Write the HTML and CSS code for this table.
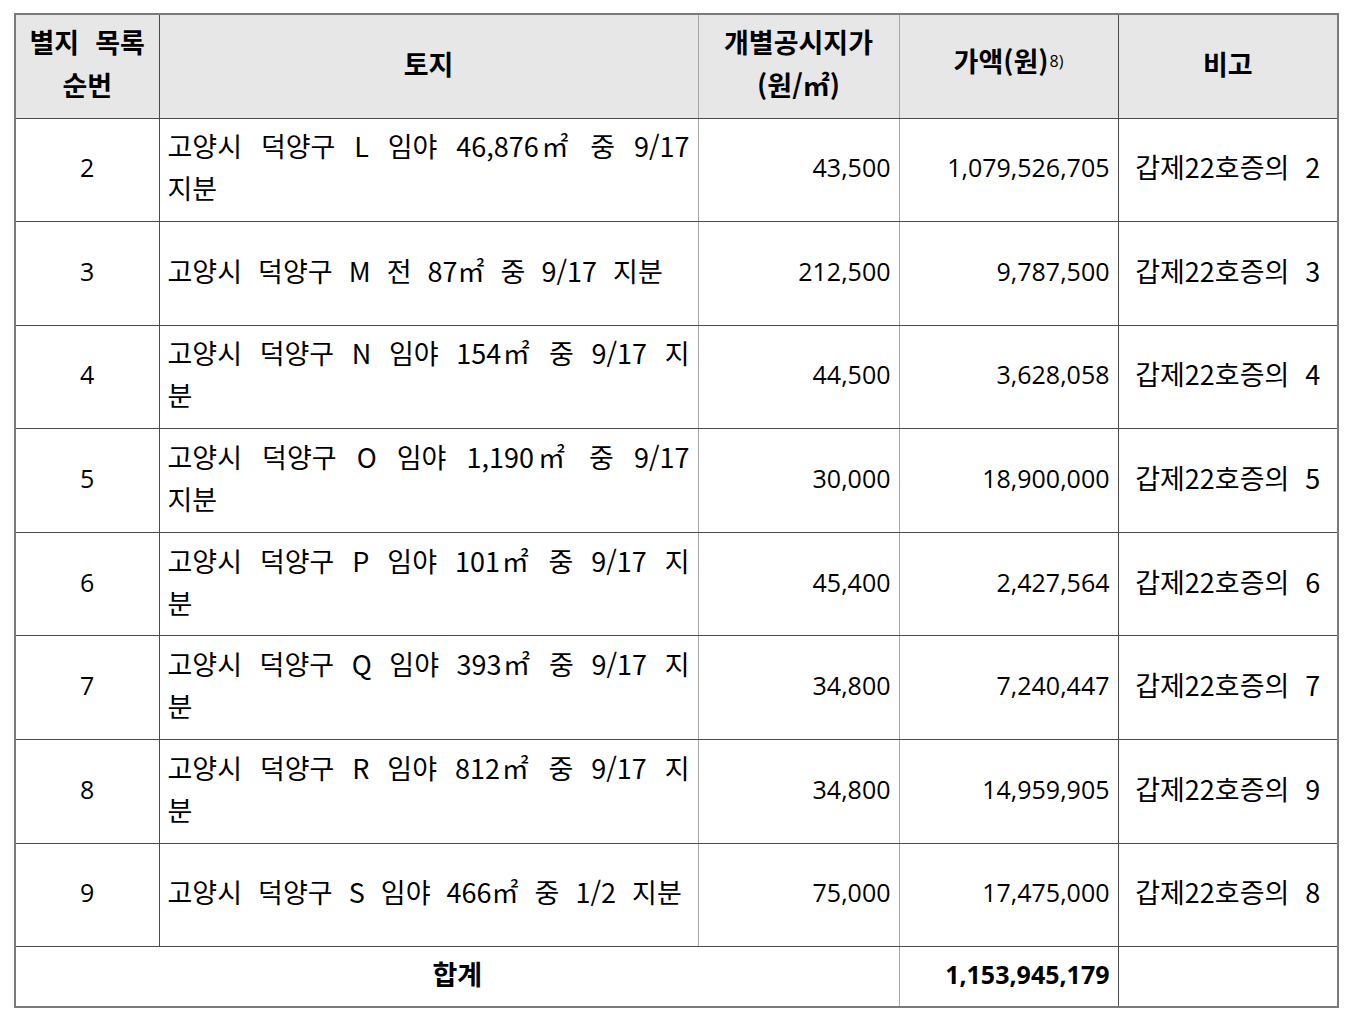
FILE: index.html
```html
<!DOCTYPE html>
<html lang="ko">
<head>
<meta charset="utf-8">
<title>별지 목록</title>
<link rel="stylesheet" href="styles.css">
</head>
<body>
<div class="page">
<table class="list">
  <colgroup>
    <col class="c-no"><col class="c-land"><col class="c-price"><col class="c-amount"><col class="c-note">
  </colgroup>
  <thead>
    <tr>
      <th class="b-dark">별지 목록 순번</th>
      <th class="b-light">토지</th>
      <th class="b-light">개별공시지가<br>(원/㎡)</th>
      <th class="b-dark">가액(원)<span class="sup">8)</span></th>
      <th>비고</th>
    </tr>
  </thead>
  <tbody>
    <tr>
      <td class="no b-dark">2</td>
      <td class="land b-light"><span class="full">고양시 덕양구 L 임야 46,876㎡ 중 9/17</span>지분</td>
      <td class="num b-light">43,500</td>
      <td class="num b-dark">1,079,526,705</td>
      <td class="note">갑제22호증의 2</td>
    </tr>
    <tr>
      <td class="no b-dark">3</td>
      <td class="land b-light">고양시 덕양구 M 전 87㎡ 중 9/17 지분</td>
      <td class="num b-light">212,500</td>
      <td class="num b-dark">9,787,500</td>
      <td class="note">갑제22호증의 3</td>
    </tr>
    <tr>
      <td class="no b-dark">4</td>
      <td class="land b-light"><span class="full">고양시 덕양구 N 임야 154㎡ 중 9/17 지</span>분</td>
      <td class="num b-light">44,500</td>
      <td class="num b-dark">3,628,058</td>
      <td class="note">갑제22호증의 4</td>
    </tr>
    <tr>
      <td class="no b-dark">5</td>
      <td class="land b-light"><span class="full">고양시 덕양구 O 임야 1,190㎡ 중 9/17</span>지분</td>
      <td class="num b-light">30,000</td>
      <td class="num b-dark">18,900,000</td>
      <td class="note">갑제22호증의 5</td>
    </tr>
    <tr>
      <td class="no b-dark">6</td>
      <td class="land b-light"><span class="full">고양시 덕양구 P 임야 101㎡ 중 9/17 지</span>분</td>
      <td class="num b-light">45,400</td>
      <td class="num b-dark">2,427,564</td>
      <td class="note">갑제22호증의 6</td>
    </tr>
    <tr>
      <td class="no b-dark">7</td>
      <td class="land b-light"><span class="full">고양시 덕양구 Q 임야 393㎡ 중 9/17 지</span>분</td>
      <td class="num b-light">34,800</td>
      <td class="num b-dark">7,240,447</td>
      <td class="note">갑제22호증의 7</td>
    </tr>
    <tr>
      <td class="no b-dark">8</td>
      <td class="land b-light"><span class="full">고양시 덕양구 R 임야 812㎡ 중 9/17 지</span>분</td>
      <td class="num b-light">34,800</td>
      <td class="num b-dark">14,959,905</td>
      <td class="note">갑제22호증의 9</td>
    </tr>
    <tr>
      <td class="no b-dark">9</td>
      <td class="land b-light">고양시 덕양구 S 임야 466㎡ 중 1/2 지분</td>
      <td class="num b-light">75,000</td>
      <td class="num b-dark">17,475,000</td>
      <td class="note">갑제22호증의 8</td>
    </tr>
    <tr class="total">
      <td colspan="3" class="sum-label b-light">합계</td>
      <td class="num strong b-dark">1,153,945,179</td>
      <td class="note"></td>
    </tr>
  </tbody>
</table>
</div>
</body>
</html>
```

FILE: styles.css
```css
html, body {
  margin: 0;
  padding: 0;
  background: #ffffff;
}

.page {
  padding: 13px 14px;
}

.list {
  border-collapse: collapse;
  table-layout: fixed;
  width: 1323px;
  font-family: "Noto Sans CJK KR", "Open Sans", sans-serif;
  font-size: 27px;
  color: #000000;
  word-spacing: 8.5px;
  border: 2px solid #7a7a7a;
}

.c-no { width: 144px; }
.c-land { width: 539px; }
.c-price { width: 201px; }
.c-amount { width: 219px; }
.c-note { width: 220px; }

.list th,
.list td {
  border-top: 1px solid #4a4a4a;
  border-bottom: 1px solid #4a4a4a;
  padding: 0 8px 5px;
  vertical-align: middle;
  line-height: 42px;
}

.list thead tr {
  height: 104px;
}

.list tbody tr {
  height: 103.6px;
}

.list tbody tr.total {
  height: 60px;
}

.list th {
  background: #e7e7e7;
  font-weight: 700;
  text-align: center;
  line-height: 43px;
  padding-bottom: 6px;
}

.b-dark {
  border-right: 1px solid #4a4a4a;
}

.b-light {
  border-right: 1px solid #a6a6a6;
}

.sup {
  font-family: "Open Sans", sans-serif;
  font-size: 16px;
  font-weight: 400;
  position: relative;
  top: -5px;
  margin-left: 1px;
  word-spacing: 0;
}

.no {
  text-align: center;
  font-family: "Open Sans", sans-serif;
  font-size: 25px;
}

.land {
  text-align: left;
}

.land .full {
  display: block;
  text-align: justify;
  text-align-last: justify;
}

.num {
  text-align: right;
  word-spacing: 0;
  font-family: "Open Sans", sans-serif;
  font-size: 25px;
}

.note {
  text-align: center;
  padding-left: 6px;
  padding-right: 6px;
}

.sum-label {
  text-align: center;
  font-weight: 700;
}

.strong {
  font-weight: 700;
}
```
